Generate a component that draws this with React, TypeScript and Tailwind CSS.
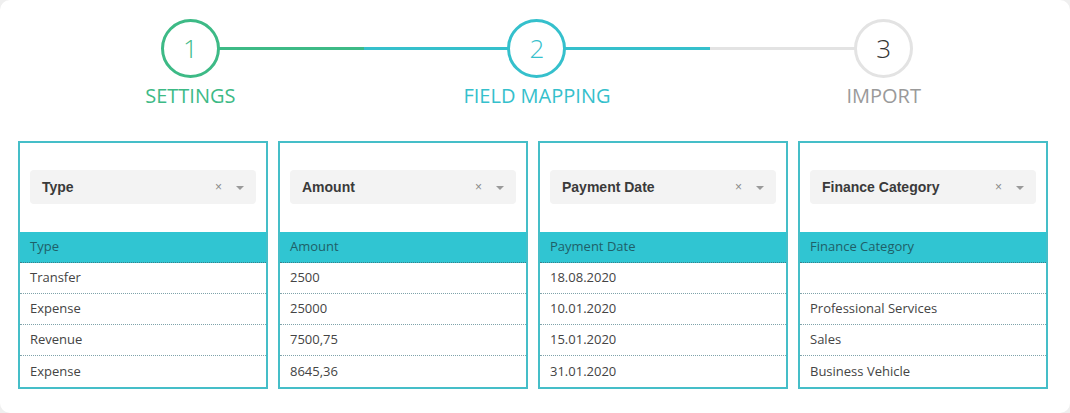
import React from "react";

const steps = [
  { n: "1", label: "SETTINGS", color: "#3dba86", text: "#3dba86", num: "#3dba86", left: null as string | null, right: "#3dba86" },
  { n: "2", label: "FIELD MAPPING", color: "#35c0cc", text: "#35c0cc", num: "#35c0cc", left: "#35c0cc", right: "#35c0cc" },
  { n: "3", label: "IMPORT", color: "#e3e3e3", text: "#9a9a9a", num: "#333333", left: "#e3e3e3", right: null as string | null },
];

const cols = [
  { sel: "Type", head: "Type", rows: ["Transfer", "Expense", "Revenue", "Expense"] },
  { sel: "Amount", head: "Amount", rows: ["2500", "25000", "7500,75", "8645,36"] },
  { sel: "Payment Date", head: "Payment Date", rows: ["18.08.2020", "10.01.2020", "15.01.2020", "31.01.2020"] },
  { sel: "Finance Category", head: "Finance Category", rows: ["", "Professional Services", "Sales", "Business Vehicle"] },
];

export default function App() {
  return (
    <div className="w-[1070px] h-[413px] bg-[#efefef] overflow-hidden" style={{ fontFamily: '"Open Sans", sans-serif' }}>
      <div className="w-[1070px] h-[413px] bg-white rounded-[10px] overflow-hidden">
        <div className="pl-[17px] pt-[19px] w-[1057px] grid grid-cols-3">
          {steps.map((s) => (
            <div key={s.n} className="relative flex flex-col items-center">
              <div className="absolute left-0 right-0 top-[28px] h-[3px] flex">
                <div className="flex-1" style={{ background: s.left ?? "transparent" }} />
                <div className="flex-1" style={{ background: s.right ?? "transparent" }} />
              </div>
              <div
                className="relative w-[59px] h-[59px] rounded-full border-[3px] bg-white flex items-center justify-center text-[26px] font-light"
                style={{ borderColor: s.color, color: s.num }}
              >
                {s.n}
              </div>
              <div className="mt-[5px] text-[20px] leading-[26px]" style={{ color: s.text }}>
                {s.label}
              </div>
            </div>
          ))}
        </div>
        <div className="mt-[32px] ml-[18px] flex gap-[10px]">
          {cols.map((c) => (
            <div key={c.sel} className="w-[250px] border-2 border-[#45bec8]">
              <div className="px-[10px] pt-[27px] pb-[28px]">
                <div className="h-[34px] rounded-[4px] bg-[#f3f3f3] flex items-center pl-[12px] pr-[12px]">
                  <span className="flex-1 text-[14px] font-bold text-[#3a3a3a]" style={{ fontFamily: '"Liberation Sans", Arial, sans-serif' }}>
                    {c.sel}
                  </span>
                  <span className="text-[12px] text-[#8a8a8a] mr-[14px]" style={{ fontFamily: '"Liberation Sans", Arial, sans-serif' }}>×</span>
                  <span className="w-0 h-0 border-l-[4px] border-r-[4px] border-t-[4px] border-l-transparent border-r-transparent border-t-[#9a9a9a] mt-[2px]" />
                </div>
              </div>
              <div className="h-[31px] bg-[#30c5d2] flex items-center px-[10px] text-[13px] text-[#1f5f68] border-b border-dotted border-[#3a7f8a]">
                {c.head}
              </div>
              {c.rows.map((r, i) => (
                <div
                  key={i}
                  className={`h-[31px] flex items-center px-[10px] text-[13px] text-[#444] ${i < 3 ? "border-b border-dotted border-[#7fa3aa]" : ""}`}
                >
                  {r}
                </div>
              ))}
            </div>
          ))}
        </div>
      </div>
    </div>
  );
}
